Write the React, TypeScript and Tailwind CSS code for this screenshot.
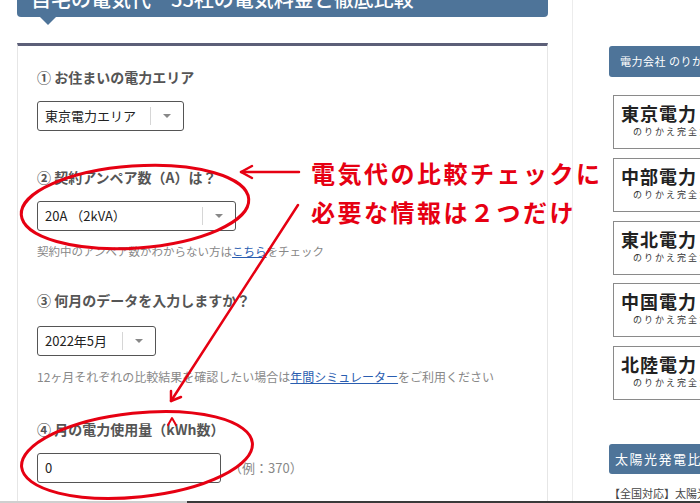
const jp = "font-['Noto_Sans_CJK_JP','Noto_Sans',sans-serif]";

function SelectBox({ value, width }: { value: string; width: string }) {
  return (
    <div className={`${width} h-[30px] flex items-center border border-[#555] rounded-[3px] bg-white`}>
      <div className="flex-1 pl-[7px] text-[13px] text-[#222] whitespace-nowrap">{value}</div>
      <div className="w-px h-[18px] bg-[#d6d6d6]" />
      <div className="w-[32px] flex justify-center">
        <div className="w-0 h-0 border-x-[4px] border-x-transparent border-t-[4px] border-t-[#888]" />
      </div>
    </div>
  );
}

function Label({ children, className = '' }: { children: React.ReactNode; className?: string }) {
  return <div className={`text-[14px] leading-[20px] font-bold text-[#555] ${className}`}>{children}</div>;
}

function CompanyCard({ name }: { name: string }) {
  return (
    <div className="ml-[4px] w-[230px] h-[54px] border border-[#8a8a8a] bg-white pl-[7px] pt-[6px]">
      <div className="text-[18px] leading-[22px] font-bold text-[#222] tracking-[1px]">{name}</div>
      <div className="ml-[12px] mt-[2px] text-[9px] leading-[12px] text-[#333] tracking-[2px]">のりかえ完全ガイド</div>
    </div>
  );
}

export default function App() {
  const companies = ['東京電力', '中部電力', '東北電力', '中国電力', '北陸電力'];

  return (
    <div className={`relative w-[700px] h-[503px] overflow-hidden bg-white flex ${jp}`}>
      {/* main column */}
      <div className="ml-[17px] w-[531px] shrink-0 flex flex-col">
        <div className="h-[17px] bg-[#4e7499] rounded-b-[4px] overflow-hidden">
          <div className="pl-[14px] -mt-[13px] text-[20px] leading-[24px] font-medium text-white whitespace-nowrap">
            自宅の電気代ー55社の電気料金と徹底比較
          </div>
        </div>
        <div className="ml-[23px] w-0 h-0 border-x-[8px] border-x-transparent border-t-[8px] border-t-[#4e7499]" />

        <div className="mt-[18px] flex-1 border-t-[3px] border-t-[#5c5f78] border-x border-x-[#e6e6e6] pl-[19px] pt-[21px]">
          <Label>① お住まいの電力エリア</Label>
          <div className="mt-[14px]">
            <SelectBox value="東京電力エリア" width="w-[147px]" />
          </div>

          <Label className="mt-[36px]">② 契約アンペア数（A）は？</Label>
          <div className="mt-[14px]">
            <SelectBox value="20A （2kVA）" width="w-[199px]" />
          </div>
          <div className="mt-[11px] text-[11.5px] leading-[18px] text-[#888]">
            契約中のアンペア数がわからない方は
            <span className="text-[#2a5db0] underline">こちら</span>
            をチェック
          </div>

          <Label className="mt-[30px]">③ 何月のデータを入力しますか？</Label>
          <div className="mt-[16px]">
            <SelectBox value="2022年5月" width="w-[119px]" />
          </div>
          <div className="mt-[12px] text-[12px] leading-[18px] text-[#888] whitespace-nowrap">
            12ヶ月それぞれの比較結果を確認したい場合は
            <span className="text-[#2a5db0] underline">年間シミュレーター</span>
            をご利用ください
          </div>

          <Label className="mt-[33px]">④ 月の電力使用量（kWh数）</Label>
          <div className="mt-[14px] flex items-center">
            <div className="w-[184px] h-[30px] border border-[#555] rounded-[3px] flex items-center pl-[7px] text-[13px] text-[#222]">
              0
            </div>
            <div className="ml-[8px] text-[13px] text-[#888]">（例：370）</div>
          </div>
        </div>
      </div>

      {/* sidebar */}
      <div className="ml-[24px] shrink-0 border-l border-l-[#ececec] pl-[36px] flex flex-col">
        <div className="mt-[46px] w-[230px] h-[31px] rounded-[3px] bg-[#4e7499] flex items-center pl-[11px] text-[11px] text-white tracking-[0.5px] whitespace-nowrap">
          電力会社 のりかえ完全ガイド
        </div>
        <div className="mt-[18px] flex flex-col gap-[8.75px]">
          {companies.map((c) => (
            <CompanyCard key={c} name={c} />
          ))}
        </div>
        <div className="mt-[44px] w-[230px] h-[30px] rounded-[3px] bg-[#4e7499] flex items-center pl-[6px] text-[13px] text-white tracking-[1.5px] whitespace-nowrap">
          太陽光発電比較サイト
        </div>
        <div className="mt-[12px] text-[11px] leading-[14px] text-[#444] whitespace-nowrap">
          【全国対応】太陽光発電の一括見積もり
        </div>
      </div>

      {/* bottom scrollbar edge */}
      <div className="absolute left-0 right-0 bottom-0 h-[2px] flex">
        <div className="w-[187px] bg-[#cfcfcf]" />
        <div className="flex-1 bg-[#3a3a3a]" />
      </div>

      {/* red annotations */}
      <svg className="absolute inset-0 pointer-events-none" width="700" height="503" viewBox="0 0 700 503">
        <g fill="none" stroke="#e60012" strokeWidth="3" strokeLinecap="round" strokeLinejoin="round">
          <ellipse cx="135" cy="207" rx="114" ry="41" transform="rotate(-4 135 207)" />
          <ellipse cx="137" cy="455" rx="116" ry="42" transform="rotate(-6 137 455)" />
          <line x1="299" y1="172" x2="241" y2="172" strokeWidth="2.5" />
          <polyline points="252,166 241,172 252,178" strokeWidth="2.5" />
          <line x1="298" y1="205" x2="171" y2="401" strokeWidth="2.5" />
          <polyline points="171,391 171,401 181,397" strokeWidth="2.5" />
          <polyline points="168,425 172,418 176,425" strokeWidth="2" />
        </g>
      </svg>
      <div className="absolute left-[311px] top-[153px] text-[24px] leading-[39px] font-bold text-[#e60012] tracking-[2.5px] whitespace-nowrap">
        <div>電気代の比較チェックに</div>
        <div>必要な情報は２つだけ</div>
      </div>
    </div>
  );
}
